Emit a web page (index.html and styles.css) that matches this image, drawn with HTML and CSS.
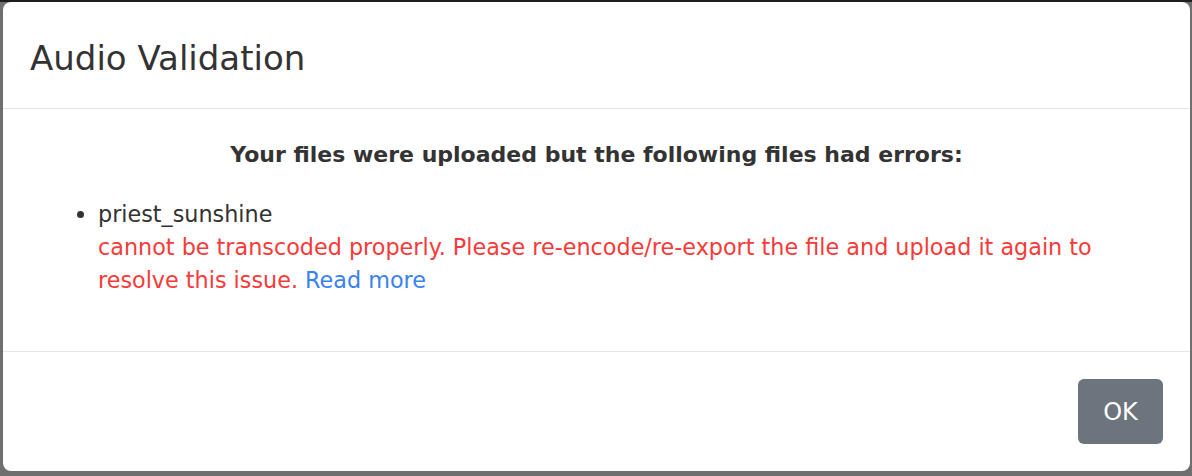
FILE: index.html
```html
<!DOCTYPE html>
<html lang="en">
<head>
<meta charset="utf-8">
<title>Audio Validation</title>
<link rel="stylesheet" href="styles.css">
</head>
<body>
<div class="backdrop">
  <div class="modal">
    <div class="modal-header">
      <h5 class="modal-title">Audio Validation</h5>
    </div>
    <div class="modal-body">
      <p class="lead-msg">Your files were uploaded but the following files had errors:</p>
      <ul class="error-list">
        <li>
          <div class="fname">priest_sunshine</div>
          <div class="err">cannot be transcoded properly. Please re-encode/re-export the file and upload it again to resolve this issue. <a class="more" href="#">Read more</a></div>
        </li>
      </ul>
    </div>
    <div class="modal-footer">
      <button class="btn-ok" type="button">OK</button>
    </div>
  </div>
</div>
</body>
</html>
```

FILE: styles.css
```css
html, body {
  margin: 0;
  padding: 0;
  height: 100%;
}
body {
  background: #6f6f6f;
  font-family: "DejaVu Sans", Verdana, sans-serif;
  color: #333;
}
.backdrop {
  height: 476px;
  box-sizing: border-box;
  padding: 2px 2px 5px 3px;
  background: linear-gradient(to bottom, #1e1e1e 0, #1e1e1e 2px, #6f6f6f 2px);
}
.modal {
  background: #fff;
  border-radius: 8px;
  height: 100%;
  display: flex;
  flex-direction: column;
}
.modal-header {
  padding: 31px 27px 25px 27px;
  border-bottom: 1px solid #e3e6ea;
}
.modal-title {
  margin: 0;
  font-size: 34px;
  font-weight: normal;
  line-height: 50px;
  color: #333;
}
.modal-body {
  flex: 1;
  padding: 29px 27px 0 27px;
  font-size: 22.3px;
  line-height: 33px;
}
.lead-msg {
  margin: 0 0 27px 0;
  text-align: center;
  font-weight: bold;
  font-size: 22px;
  color: #333;
}
.error-list {
  margin: 0;
  padding-left: 68px;
}
.error-list li {
  line-height: 33px;
}
.err {
  color: #f73a3a;
}
.more {
  color: #3a82f2;
  text-decoration: none;
}
.modal-footer {
  border-top: 1px solid #e3e6ea;
  padding: 27px 27px 27px 27px;
  display: flex;
  justify-content: flex-end;
}
.btn-ok {
  width: 85px;
  height: 65px;
  border: 0;
  border-radius: 6px;
  background: #6c757d;
  color: #fff;
  font-family: "DejaVu Sans", Verdana, sans-serif;
  font-size: 24px;
  padding: 0;
}
```
